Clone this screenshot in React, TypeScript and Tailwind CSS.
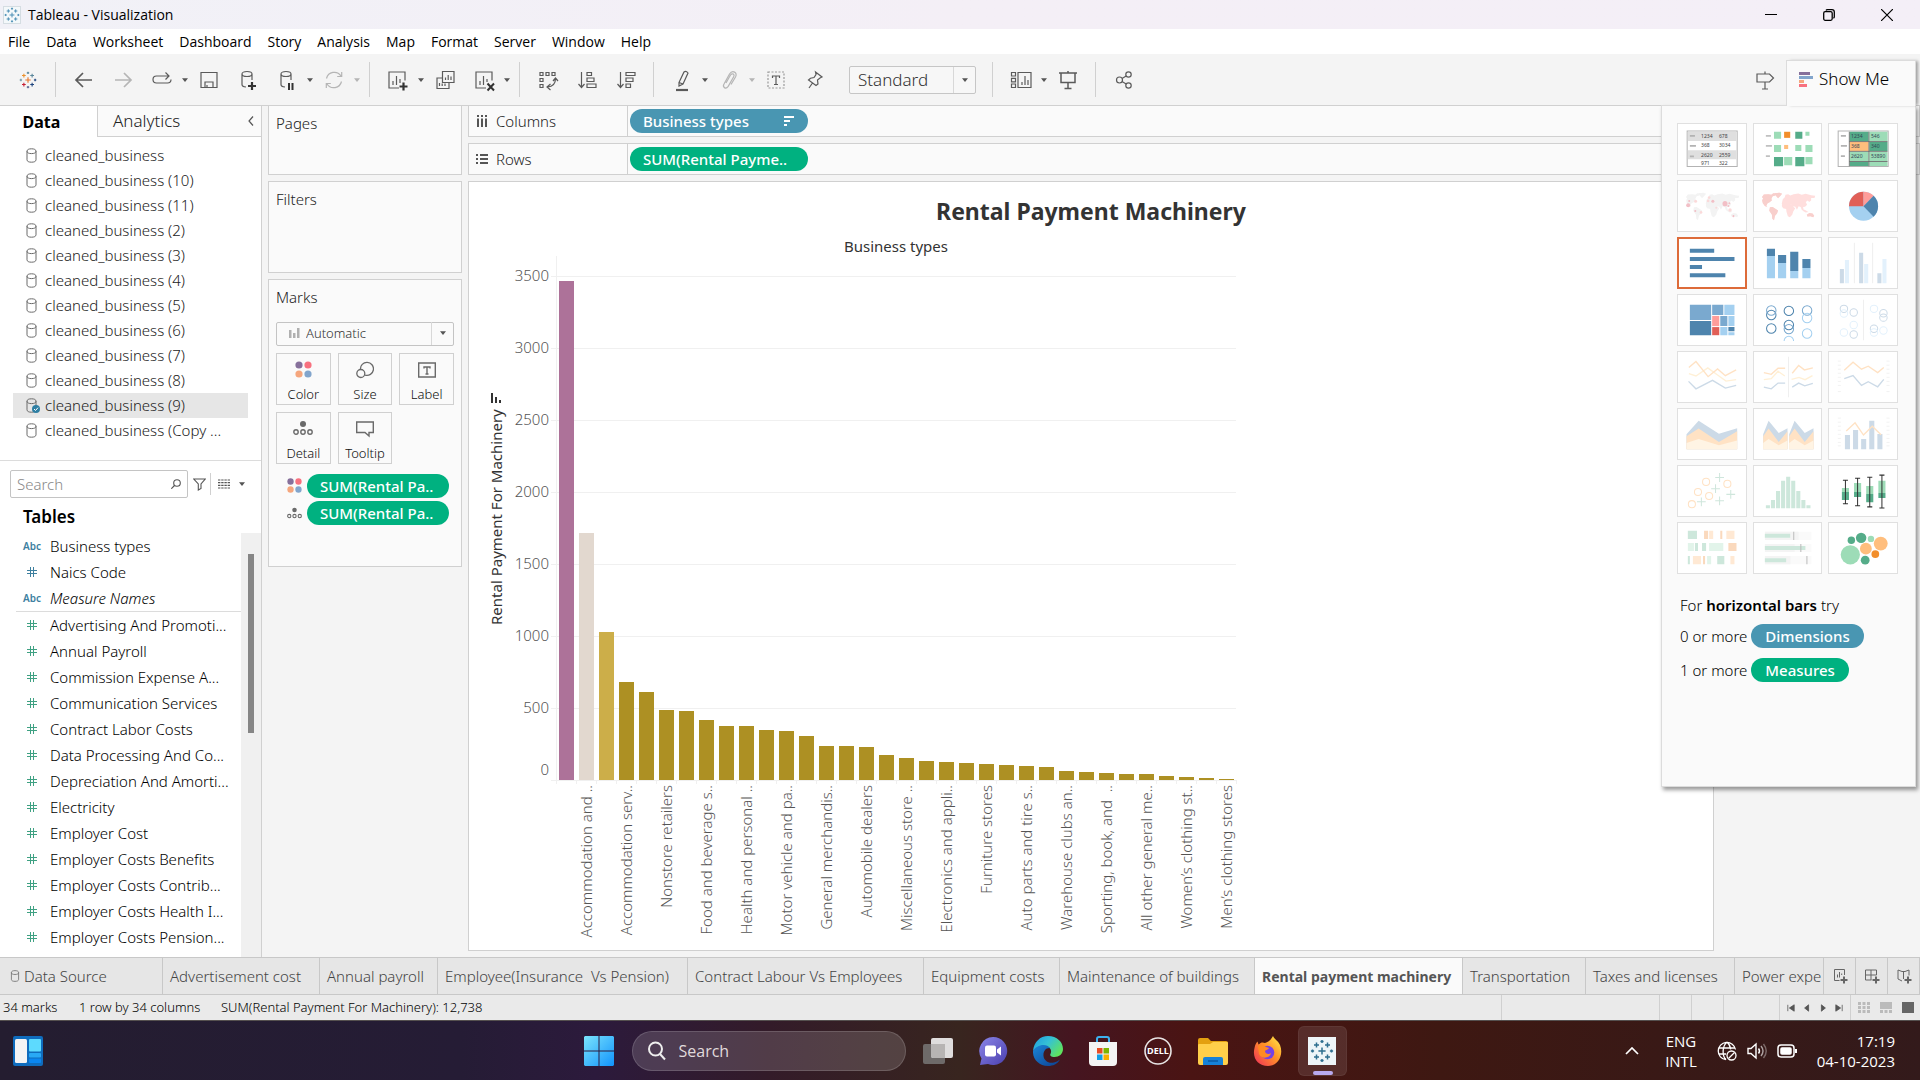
import React from 'react'

type Kids = { children?: React.ReactNode }

/* ---------- small shared drawings ---------- */

function Caret({ light = false }: { light?: boolean }) {
  return (
    <svg viewBox="0 0 8 5" className={light ? 'h-[4px] w-[6px] text-[#b5b5b5]' : 'h-[4px] w-[6px] text-[#555]'} aria-hidden="true">
      <path d="M0 0h8L4 5z" fill="currentColor" />
    </svg>
  )
}

function Cylinder({ className = 'h-[15px] w-[11px]' }: { className?: string }) {
  return (
    <svg viewBox="0 0 11 15" className={className} fill="none" stroke="#6a6a6a" aria-hidden="true">
      <path d="M1 3.2C1 1.600 2.800 .8 5.500 .8S10 1.600 10 3.200v8.600c0 1.600-1.800 2.400-4.500 2.400S1 13.400 1 11.800zM1 3.200c0 1.600 1.800 2.400 4.500 2.400S10 4.800 10 3.200" />
    </svg>
  )
}

function ColorDots({ className = 'h-4 w-4' }: { className?: string }) {
  return (
    <svg viewBox="0 0 17 17" className={className} aria-hidden="true">
      <circle cx="4" cy="4" r="3.6" fill="#86709b" />
      <circle cx="13" cy="4" r="3.6" fill="#f8717f" />
      <circle cx="4" cy="13" r="3.6" fill="#f5a67d" />
      <circle cx="13" cy="13" r="3.6" fill="#82a5cc" />
    </svg>
  )
}

function DetailDots({ className = 'h-4 w-5' }: { className?: string }) {
  return (
    <svg viewBox="0 0 20 16" className={className} fill="none" stroke="#6a6a6a" strokeWidth="1.4" aria-hidden="true">
      <circle cx="10" cy="4" r="3" fill="#6a6a6a" stroke="none" />
      <circle cx="3" cy="12" r="2.2" />
      <circle cx="10" cy="12" r="2.200" />
      <circle cx="17" cy="12" r="2.200" />
    </svg>
  )
}

/* Cross made of smaller crosses; one colour per cross */
function TableauMark({ className, colors }: { className: string; colors: string[] }) {
  const marks: [number, number, number][] = [
    [12, 12, 3.600], [6.500, 6, 2.500], [17.500, 6, 2.500], [6.500, 18, 2.500], [17.500, 18, 2.500],
    [12, 2.500, 1.600], [12, 21.500, 1.600], [2.500, 12, 1.600], [21.500, 12, 1.600],
  ]
  return (
    <svg viewBox="0 0 24 24" className={className} strokeWidth="1.5" aria-hidden="true">
      {marks.map(([x, y, r], i) => (
        <path key={i} d={`M${x - r} ${y}h${2 * r}M${x} ${y - r}v${2 * r}`} stroke={colors[i % colors.length]} />
      ))}
    </svg>
  )
}

/* ---------- title bar and menu ---------- */

function TitleBar() {
  return (
    <header className="flex h-[29px] items-center bg-linear-to-r from-[#f1f1f7] via-[#f4eff6] to-[#f4eff7] font-['Open_Sans',sans-serif] font-normal">
      <div className="ml-[3px] flex h-[18px] w-[18px] items-center justify-center border border-[#d5dde2] bg-[#f3f8fa]">
        <TableauMark className="h-4 w-4" colors={['#4d8fb5']} />
      </div>
      <h1 className="ml-[7px] flex-1 text-[14px] text-black">Tableau - Visualization</h1>
      <div className="flex h-full pr-1 text-black">
        <button aria-label="Minimize" className="flex w-[58px] items-center justify-center">
          <svg viewBox="0 0 12 12" className="h-3 w-3"><path d="M0 5.500h12" stroke="currentColor" /></svg>
        </button>
        <button aria-label="Restore" className="flex w-[58px] items-center justify-center">
          <svg viewBox="0 0 12 12" className="h-3 w-3" fill="none" stroke="currentColor" strokeWidth="1.300">
            <rect x=".7" y="2.700" width="8.500" height="8.600" rx="1.500" />
            <path d="M3 1.500Q3.300.7 4.500.7H9q2.300 0 2.300 2.300v4.700q0 1-.9 1.500" />
          </svg>
        </button>
        <button aria-label="Close" className="flex w-[58px] items-center justify-center">
          <svg viewBox="0 0 12 12" className="h-3 w-3"><path d="M0 0l12 12M12 0L0 12" stroke="currentColor" strokeWidth="1.200" /></svg>
        </button>
      </div>
    </header>
  )
}

function MenuBar() {
  const items = ['File', 'Data', 'Worksheet', 'Dashboard', 'Story', 'Analysis', 'Map', 'Format', 'Server', 'Window', 'Help']
  return (
    <nav className="flex h-[25px] items-center bg-white font-['Open_Sans',sans-serif] text-[14px] font-normal text-black">
      {items.map((m) => (
        <button key={m} className="px-2">{m}</button>
      ))}
    </nav>
  )
}

/* ---------- toolbar ---------- */

function Tool({ label, light = false, children }: Kids & { label: string; light?: boolean }) {
  return (
    <button aria-label={label} className={light ? 'flex h-8 w-[39px] items-center justify-center text-[#b5b5b5]' : 'flex h-8 w-[39px] items-center justify-center text-[#5a5a5a]'}>
      <svg viewBox="0 0 24 24" className="h-6 w-6" fill="none" stroke="currentColor" strokeWidth="1.200" aria-hidden="true">
        {children}
      </svg>
    </button>
  )
}

function Drop({ label, light = false }: { label: string; light?: boolean }) {
  return (
    <button aria-label={label} className="flex h-8 w-2 items-center justify-center">
      <Caret light={light} />
    </button>
  )
}

const Rule = () => <div className="mx-2 h-[35px] w-px bg-[#d0d0d0]" />

function Toolbar() {
  return (
    <div className="flex h-[51px] items-center bg-[#f4f4f4] pl-2">
      <button aria-label="Start page" className="flex h-8 w-[39px] items-center justify-center">
        <TableauMark className="h-[18px] w-[18px]" colors={['#e8762c', '#eb912c', '#5b879b', '#c72035', '#1f447e', '#59879b', '#5b6591', '#7199a6', '#1f457e']} />
      </button>
      <Rule />
      <Tool label="Undo"><path d="M20 12H4.500M11 5l-7 7 7 7" strokeWidth="1.700" /></Tool>
      <Tool label="Redo" light><path d="M4 12h15.500M13 5l7 7-7 7" strokeWidth="1.700" /></Tool>
      <Tool label="Replay">
        <path d="M13 15H6.500Q3 15 3 11.500T6.500 8H19M17.500 15Q21 15 21 11.500M12.500 15h5M15.500 4.500L19 8l-3.500 3.500" />
      </Tool>
      <Drop label="Replay options" />
      <Tool label="Save"><path d="M4 4.500h16v15H4zM8 19.500v-5.500h8v5.500M10 17v2.500" /></Tool>
      <Tool label="New data source">
        <path d="M6 6c0-1.500 2-2.500 5-2.500s5 1 5 2.500v6M6 6v10.500c0 1.500 1.500 2.300 4 2.500M6 6c0 1.500 2 2.500 5 2.500S16 7.500 16 6" />
        <path d="M16 14v8M12 18h8" stroke="#333" strokeWidth="2.200" />
      </Tool>
      <Tool label="Pause auto updates">
        <path d="M6 6c0-1.500 2-2.500 5-2.500s5 1 5 2.500v6M6 6v10.500c0 1.500 1.500 2.300 4 2.500M6 6c0 1.500 2 2.500 5 2.500S16 7.500 16 6" />
        <path d="M14 15v7M17.500 15v7" stroke="#333" strokeWidth="2" />
      </Tool>
      <Drop label="Update options" />
      <Tool label="Run update" light>
        <path d="M4.500 10.500A8 8 0 0 1 19 8M19.500 13.500A8 8 0 0 1 5 16M19.700 4v4.500h-4.500M4.300 20v-4.500h4.500" />
      </Tool>
      <Drop label="Run options" light />
      <Rule />
      <Tool label="New worksheet">
        <path d="M19 12.500V4H3v16h10M7 17v-4M10.500 17V8M14 15v-4" />
        <path d="M17.500 14.500v8M13.500 18.500h8" stroke="#333" strokeWidth="2.200" />
      </Tool>
      <Drop label="New sheet options" />
      <Tool label="Duplicate sheet">
        <path d="M9.500 3.500h11.500v11H9.500zM12.500 12V9.500M15.200 12V7M18 12V8.500M9.500 10H4v10.500h12v-6M6.500 18v-3M9.200 18v-2.500M12 18v-2.500" />
      </Tool>
      <Tool label="Clear sheet">
        <path d="M20 12.500V4H4v16h10M8 17v-4M11.500 17V8M15 14v-3" />
        <path d="M15.500 15.500l6.500 7M22 15.500l-6.500 7" stroke="#333" strokeWidth="2" />
      </Tool>
      <Drop label="Clear options" />
      <Rule />
      <Tool label="Swap rows and columns">
        <path d="M4 4.500h3v3H4zM10 4.500h3v3h-3zM16 4.500h3v3h-3zM4 10.500h3v3H4zM4 16.500h3v3H4zM19.500 10.500c0 5-2 8-8 8.500M17 13l2.500-3 2.500 3M14.500 16l-3.500 3 3.500 3" />
      </Tool>
      <Tool label="Sort ascending">
        <path d="M6.500 4v15M3.500 16l3 3.500 3-3.500M12 4.500h4.500v3H12zM12 10h7v3.500h-7zM12 16h9v3.500h-9z" />
      </Tool>
      <Tool label="Sort descending">
        <path d="M6.500 4v15M3.500 16l3 3.500 3-3.500M12 4.500h9v3h-9zM12 10h7v3.500h-7zM12 16h4.500v3.500H12z" />
      </Tool>
      <Rule />
      <Tool label="Highlight">
        <path d="M9 14.500L14 4q2-1.500 4 1l-5 11-4 2zM9 14.500l4 1.500" />
        <path d="M6 22h12" strokeWidth="2.200" />
      </Tool>
      <Drop label="Highlight options" />
      <Tool label="Group members" light>
        <path d="M9 15l4.500-8c2-2.500 4.500-.5 3.200 1.800l-5.500 9.500c-2.500 3.500-6 .8-4.200-2.300L12.500 6C15.500 1.500 21 4.500 18.500 9L14 16.500" />
      </Tool>
      <Drop label="Group options" light />
      <Tool label="Show mark labels">
        <rect x="4" y="4" width="16" height="16" stroke="#999" strokeDasharray="2 1.500" />
        <path d="M8.500 10V8h7v2M12 8v8.500M10 16.500h4" />
      </Tool>
      <Tool label="Fix axes">
        <path d="M12.500 4l6.500 5-2 1-2.500 2 .5 4-2 1.500-7.500-5.500 2-1.800 3.500-.7 2-3zM9.500 15L6 20" />
      </Tool>
      <div className="relative ml-[15px] mr-2">
        <select aria-label="Fit" className="h-7 w-[127px] appearance-none rounded-xs border border-[#c6c6c6] bg-[#f7f7f7] pl-2 text-[17px] leading-6 text-[#333]">
          <option>Standard</option>
        </select>
        <div className="pointer-events-none absolute inset-y-px right-px flex w-[22px] items-center justify-center border-l border-[#d8d8d8]"><Caret /></div>
      </div>
      <Rule />
      <Tool label="Show or hide cards">
        <path d="M2.500 4.500h4v3.500h-4zM2.500 10.300h4v3.500h-4zM2.500 16h4v3.500h-4zM9 4.500h13v15H9zM13 17v-3M16 17V8M19 17v-5" />
      </Tool>
      <Drop label="Card options" />
      <Tool label="Presentation mode"><path d="M3 5h18M5 5v9.500h14V5M12 14.500v6M8.500 20.500h7M12 3v2" strokeWidth="1.500" /></Tool>
      <Rule />
      <Tool label="Share">
        <circle cx="7.500" cy="12" r="3" /><circle cx="16.500" cy="6.500" r="2.700" /><circle cx="16.500" cy="17.500" r="2.700" />
        <path d="M10 10.500l4.200-2.500M10 13.500l4.200 2.500" />
      </Tool>
      <div className="ml-auto mr-[136px]">
        <Tool label="Guide"><path d="M4 6h12.500l4 4-4 4H4zM12 3.500v2.500M12 14v7M9 21h6" /></Tool>
      </div>
    </div>
  )
}

/* ---------- data pane ---------- */

const sources = ['', ' (10)', ' (11)', ' (2)', ' (3)', ' (4)', ' (5)', ' (6)', ' (7)', ' (8)', ' (9)', ' (Copy ...']

const measures = [
  'Advertising And Promoti...', 'Annual Payroll', 'Commission Expense A...', 'Communication Services', 'Contract Labor Costs',
  'Data Processing And Co...', 'Depreciation And Amorti...', 'Electricity', 'Employer Cost', 'Employer Costs Benefits',
  'Employer Costs Contrib...', 'Employer Costs Health I...', 'Employer Costs Pension...',
]

function HashIcon({ green = false }: { green?: boolean }) {
  return (
    <svg viewBox="0 0 10 10" className="h-[10px] w-[10px]" stroke={green ? '#3fa183' : '#3d7f9f'} strokeWidth="1" aria-hidden="true">
      <path d="M3.500 0v10M6.500 0v10M0 3.500h10M0 6.500h10" />
    </svg>
  )
}

function Field({ icon, name, italic = false }: { icon: React.ReactNode; name: string; italic?: boolean }) {
  return (
    <li className="flex h-[26px] items-center">
      <span className="flex w-8 justify-center">{icon}</span>
      <span className={italic ? 'pl-[2px] italic' : 'pl-[2px]'}>{name}</span>
    </li>
  )
}

const Abc = () => <span className="text-[10px] font-semibold text-[#3d7f9f]">Abc</span>

function DataPane() {
  return (
    <aside className="flex w-[262px] shrink-0 flex-col border-r border-[#d0d0d0] bg-white text-[15px] text-[#222]">
      <div className="flex h-[31px]">
        <button className="w-[97px] pr-7 text-[16px] font-bold text-black"><span className="pl-[14px]">Data</span></button>
        <button className="flex flex-1 items-center justify-between border-b border-l border-[#d0d0d0] bg-[#fafafa] pl-[15px] pr-[7px] text-[17px] text-[#222]">
          Analytics
          <svg viewBox="0 0 6 10" className="h-[10px] w-[6px]" fill="none" stroke="#555" strokeWidth="1.200" aria-hidden="true"><path d="M5 .5L1 5l4 4.500" /></svg>
        </button>
      </div>
      <ul className="h-[324px] border-b border-[#dcdcdc] px-[13px] pt-[6px]">
        {sources.map((s) => (
          <li key={s} className={s === ' (9)' ? 'flex h-[25px] items-center gap-2 bg-[#e6e6e6] pl-[13px]' : 'flex h-[25px] items-center gap-2 pl-[13px]'}>
            <span className="relative">
              <Cylinder />
              {s === ' (9)' && (
                <svg viewBox="0 0 8 8" className="absolute -right-[3px] bottom-0 h-2 w-2" aria-hidden="true">
                  <circle cx="4" cy="4" r="4" fill="#2f7fa3" />
                  <path d="M2 4l1.500 1.500L6 2.700" fill="none" stroke="#fff" />
                </svg>
              )}
            </span>
            <span className="whitespace-nowrap">cleaned_business{s}</span>
          </li>
        ))}
      </ul>
      <div className="flex items-center pl-[10px] pt-[9px]">
        <label className="flex h-7 w-[178px] shrink-0 items-center rounded-xs border border-[#c4c4c4] bg-white px-[6px]">
          <input aria-label="Search fields" placeholder="Search" className="w-full min-w-0 outline-none placeholder:text-[#888]" />
          <svg viewBox="0 0 10 10" className="h-[10px] w-[10px] shrink-0" fill="none" stroke="#555" strokeWidth="1.100" aria-hidden="true"><circle cx="6" cy="4" r="3.300" /><path d="M3.500 6.500L.3 9.700" /></svg>
        </label>
        <button aria-label="Filter fields" className="flex w-[22px] justify-center">
          <svg viewBox="0 0 13 13" className="h-[13px] w-[13px]" fill="none" stroke="#555" strokeWidth="1.100"><path d="M.8 1h11.400L8 6v4.500L5.300 12V6z" /></svg>
        </button>
        <div className="h-[22px] w-px bg-[#d0d0d0]" />
        <button aria-label="View as" className="flex w-[34px] items-center justify-end gap-[9px]">
          <svg viewBox="0 0 12 10" className="h-[10px] w-3" stroke="#555" strokeWidth="1.200" strokeDasharray="2.400 .8"><path d="M0 1h12M0 3.700h12M0 6.300h12M0 9h12" /></svg>
          <Caret />
        </button>
      </div>
      <h2 className="pl-[23px] pt-[7px] text-[17px] font-semibold leading-6 text-black">Tables</h2>
      <div className="mt-[4px] flex min-h-0 flex-1 overflow-hidden text-black">
        <ul className="flex-1 whitespace-nowrap pl-4">
          <Field icon={<Abc />} name="Business types" />
          <Field icon={<HashIcon />} name="Naics Code" />
          <Field icon={<Abc />} name="Measure Names" italic />
          <li className="border-b border-[#dcdcdc]" />
          {measures.map((m) => <Field key={m} icon={<HashIcon green />} name={m} />)}
        </ul>
        <div className="w-5 bg-[#f0f0f0] pt-[21px]">
          <div className="mx-auto h-[179px] w-[6px] bg-[#868686]" />
        </div>
      </div>
    </aside>
  )
}

/* ---------- cards ---------- */

function MarkButton({ label, children }: Kids & { label: string }) {
  return (
    <button className="flex h-[52px] flex-col items-center justify-between border border-[#d0d0d0] pb-px pt-[7px] text-[13px] leading-[18px] text-[#111]">
      {children}
      {label}
    </button>
  )
}

function MarksPill({ icon }: { icon: React.ReactNode }) {
  return (
    <div className="flex items-center">
      <span className="flex w-[31px] justify-center pl-[5px]">{icon}</span>
      <button className="h-6 w-[142px] rounded-full bg-[#00b180] pl-[13px] text-left font-medium leading-6 text-white">SUM(Rental Pa..</button>
    </div>
  )
}

function Cards() {
  return (
    <section className="flex w-[194px] shrink-0 flex-col gap-[6px] text-[15px] text-[#222]">
      <div className="h-[69px] border border-t-0 border-[#d0d0d0] bg-[#fafafa] px-[7px] pt-[6px] leading-[22px]">Pages</div>
      <div className="h-[92px] border border-[#d0d0d0] bg-[#fafafa] px-[7px] pt-[6px] leading-[22px]">Filters</div>
      <div className="h-[288px] border border-[#d0d0d0] bg-[#fafafa] px-[7px] pt-[6px]">
        <h2 className="leading-[22px]">Marks</h2>
        <div className="relative mt-[13px]">
          <svg viewBox="0 0 11 10" className="absolute left-[13px] top-[7px] h-[10px] w-[11px]" fill="#b0b0b0" aria-hidden="true"><path d="M0 2h2.500v8H0zM4 5h2.500v5H4zM8 0h2.500v10H8z" /></svg>
          <select aria-label="Mark type" className="h-6 w-full appearance-none rounded-xs border border-[#c4c4c4] bg-[#fafafa] pl-[29px] text-[13px] text-[#333]">
            <option>Automatic</option>
          </select>
          <div className="pointer-events-none absolute inset-y-px right-px flex w-[22px] items-center justify-center border-l border-[#d8d8d8]"><Caret /></div>
        </div>
        <div className="mt-[7px] grid grid-cols-3 gap-[7px]">
          <MarkButton label="Color"><ColorDots className="h-[17px] w-[17px]" /></MarkButton>
          <MarkButton label="Size">
            <svg viewBox="0 0 18 18" className="h-[18px] w-[18px]" fill="none" stroke="#6a6a6a" strokeWidth="1.300"><path d="M4.500 8.500a6.500 6.500 0 1 1 4.600 5.600" /><circle cx="4.800" cy="12.500" r="4" /></svg>
          </MarkButton>
          <MarkButton label="Label">
            <svg viewBox="0 0 18 18" className="h-[18px] w-[18px]" fill="none" stroke="#6a6a6a" strokeWidth="1.400"><path d="M.7 2h16.600v14H.7zM6 7.500V6h6v1.500M9 6v7M7.500 13h3" /></svg>
          </MarkButton>
          <MarkButton label="Detail"><DetailDots /></MarkButton>
          <MarkButton label="Tooltip">
            <svg viewBox="0 0 18 18" className="h-[18px] w-[18px]" fill="none" stroke="#6a6a6a" strokeWidth="1.400"><path d="M.7 2h16.600v10.500H13V16l-4-3.500H.7z" /></svg>
          </MarkButton>
        </div>
        <div className="mt-[10px] flex flex-col gap-[3px]">
          <MarksPill icon={<ColorDots className="h-[15px] w-[15px]" />} />
          <MarksPill icon={<DetailDots className="h-3 w-[15px]" />} />
        </div>
      </div>
    </section>
  )
}

/* ---------- shelves and chart ---------- */

function Shelf({ name, icon, children, first = false }: Kids & { name: string; icon: string; first?: boolean }) {
  return (
    <div className={first ? 'flex h-[31px] border border-t-0 border-[#d0d0d0] bg-[#fafafa]' : 'flex h-8 border border-[#d0d0d0] bg-[#fafafa]'}>
      <div className="flex w-[159px] items-center gap-2 border-r border-[#d0d0d0] pl-[7px] text-[#222]">
        <svg viewBox="0 0 12 12" className="h-3 w-3" stroke="#555" strokeWidth="2" aria-hidden="true"><path d={icon} /></svg>
        {name}
      </div>
      <div className="flex items-center pl-[2px] font-medium text-white">{children}</div>
    </div>
  )
}

const bars = [499, 247, 148, 98, 88, 70, 69, 60, 54, 54, 50, 49, 44, 34, 34, 33, 25, 22, 19, 18, 17, 16, 15, 14, 13, 9, 8, 7, 6, 6, 4, 3, 2, 1]
const barColors = ['#ad7299', '#e2d8cf', '#ccae49']
const categories = [
  'Accommodation and ..', 'Accommodation serv..', 'Nonstore retailers', 'Food and beverage s..', 'Health and personal ..', 'Motor vehicle and pa..',
  'General merchandis..', 'Automobile dealers', 'Miscellaneous store ..', 'Electronics and appli..', 'Furniture stores', 'Auto parts and tire s..',
  'Warehouse clubs an..', 'Sporting, book, and  ..', 'All other general me..', 'Women’s clothing st..', 'Men’s clothing stores',
]

function Chart() {
  const ticks = [0, 500, 1000, 1500, 2000, 2500, 3000, 3500]
  return (
    <svg viewBox="481 236 760 710" className="ml-3 h-[710px] w-[760px]" fontSize="15" role="img" aria-label="Rental payment for machinery by business type">
      <text x="896" y="252" textAnchor="middle" fill="#333" className="font-normal">Business types</text>
      {ticks.map((t) => (
        <g key={t}>
          <path d={`M551 ${780.5 - t * 0.144}H1236`} stroke="#f0f0f0" />
          <text x="549" y={t === 0 ? 775 : 785 - t * 0.144} textAnchor="end" fill="#555">{t}</text>
        </g>
      ))}
      <path d="M556.500 256v528" stroke="#f0f0f0" />
      {bars.map((h, i) => (
        <g key={i}>
          <path d={`M${576.5 + i * 20} 780v4`} stroke="#f0f0f0" />
          <rect x={559 + i * 20} y={780 - h} width="15" height={h} fill={barColors[i] ?? '#ad9023'} />
        </g>
      ))}
      {categories.map((c, i) => (
        <text key={c} transform={`translate(${592 + i * 40} 785) rotate(-90)`} textAnchor="end" fill="#555" xmlSpace="preserve">{c}</text>
      ))}
      <text transform="translate(502 625) rotate(-90)" fill="#333" className="font-normal">Rental Payment For Machinery</text>
      <path d="M491 393h2v10h-2zM495 397h2v6h-2zM499 400h2v3h-2z" fill="#333" />
    </svg>
  )
}

function Worksheet() {
  return (
    <main className="flex min-w-0 flex-1 flex-col gap-[6px] pb-[6px] text-[15px]">
      <Shelf first name="Columns" icon="M2 3.500v8.500M6 3.500v8.500M10 3.500v8.500M2 0v2M6 0v2M10 0v2">
        <button className="flex h-6 w-[178px] items-center justify-between rounded-full bg-[#4996b2] pl-[13px] pr-[14px]">
          Business types
          <svg viewBox="0 0 10 10" className="h-[10px] w-[10px]" fill="#fff" aria-hidden="true"><path d="M0 0h10v2H0zM0 4h6v2H0zM0 8h3v2H0z" /></svg>
        </button>
      </Shelf>
      <Shelf name="Rows" icon="M0 2h2M4 2h8M0 6h2M4 6h8M0 10h2M4 10h8">
        <button className="h-6 w-[178px] rounded-full bg-[#00b180] pl-[13px] text-left">SUM(Rental Payme..</button>
      </Shelf>
      <div className="mr-[206px] flex-1 border border-[#d0d0d0] bg-white">
        <h2 className="pb-2 pt-3 text-center text-[23px] font-bold leading-[34px] text-[#333]">Rental Payment Machinery</h2>
        <Chart />
      </div>
    </main>
  )
}

/* ---------- Show Me ---------- */

const world = 'M336 262l6-8 14-1 8 2 6-5 10 1-4 6-8 2-4 8 2 4-7 6-6 3-4 8 4 4-8-4-6-8-2-8 3-8zM374 250l14-1 8 3-6 7-6 6-5-6zM360 292l8-1 8 5 8 5-3 9-6 7-3 13-5-4-1-12-8-12zM398 268l6-6 2-7 8-2 6 4 10-4 14-2 10 4 12-3 16 4 12 2-2 6-10 0 0 8-6 4-4-4-6 4 4 8-6 6-6 1 2 8-5 2-4-10-6-2-5 10-5-9-8-2-4-6-10 2-8-1-8 4-2-6zM397 281l14-2 14 4 6 9 4 3-6 9-3 10-7 7-6-3-4-13-1-8-9-2-4-7zM456 296l8 4 10 6-8 1-8-4zM469 314l8-5 9 1 5 7-3 4-8-3-9 1z'

const thumbs: { label: string; art: React.ReactNode }[] = [
  {
    label: 'Text table',
    art: (
      <g>
        <path d="M30 24h148v105H30z" fill="#fff" stroke="#b3b3b3" strokeWidth="3" />
        <path d="M32 26h144v27H32zM32 81h144v26H32z" fill="#dfdfdf" />
        <path d="M38 38h15M38 68h18M38 99h12" stroke="#b3b3b3" strokeWidth="5" />
        <g fontSize="15" fill="#444" fontWeight="400"><text x="71" y="45">1234</text><text x="124" y="45">678</text><text x="71" y="72">368</text><text x="124" y="72">3034</text><text x="71" y="100">2620</text><text x="124" y="100">2559</text><text x="71" y="123">971</text><text x="124" y="123">322</text></g>
      </g>
    ),
  },
  {
    label: 'Heat map',
    art: (
      <g>
        <path d="M38 38h15M38 68h18M38 98h12" stroke="#c0c0c0" strokeWidth="5" />
        <path d="M62 26h21v21H62zM155 26h12v12h-12zM62 65h21v21H62zM125 65h18v18h-18zM155 65h21v21h-21zM92 101h24v24H92zM155 101h21v21h-21z" fill="#9ddcb7" />
        <path d="M125 26h21v21h-21zM62 101h27v27H62zM125 101h27v27h-27z" fill="#55ac89" />
        <path d="M92 26h18v18H92z" fill="#f28e2b" /><path d="M92 65h12v12H92z" fill="#ffbe7d" />
      </g>
    ),
  },
  {
    label: 'Highlight table',
    art: (
      <g>
        <path d="M30 24h148v105H30z" fill="#fff" stroke="#b3b3b3" strokeWidth="3" />
        <path d="M64 26h56v28H64zM122 56h54v27h-54zM64 115h56v12H64z" fill="#55ac89" />
        <path d="M122 26h54v28h-54zM64 85h56v28H64zM122 85h54v28h-54zM122 115h54v12h-54z" fill="#9ddcb7" /><path d="M64 56h56v27H64z" fill="#ffbe7d" />
        <path d="M63 26v102M121 26v102M63 55h113M63 84h113M63 114h113" stroke="#666" strokeWidth="2.500" />
        <path d="M38 38h15M38 68h18M38 98h12" stroke="#b3b3b3" strokeWidth="5" />
        <g fontSize="15" fill="#345" fontWeight="400"><text x="68" y="44">1234</text><text x="127" y="44">546</text><text x="68" y="74">368</text><text x="127" y="74">340</text><text x="68" y="105">2620</text><text x="127" y="105">53890</text></g>
      </g>
    ),
  },
  {
    label: 'Symbol map',
    art: (
      <g>
        <path d={world} transform="translate(-310 -211)" fill="#f3f3f3" />
        <g fill="#f2bfc6"><circle cx="33" cy="75" r="6" /><circle cx="36" cy="62" r="3" /><circle cx="106" cy="63" r="4.500" /><circle cx="142" cy="70" r="7.500" /><circle cx="155" cy="69" r="3" /><circle cx="152" cy="77" r="3" /><circle cx="54" cy="92" r="3" /><circle cx="167" cy="107" r="3" /></g>
        <g fill="#fbdada"><circle cx="55" cy="63" r="4.500" /><circle cx="92" cy="62" r="4" /><circle cx="95" cy="52" r="4" /><circle cx="71" cy="96" r="4" /><circle cx="116" cy="82" r="3" /><circle cx="157" cy="89" r="5" /></g>
      </g>
    ),
  },
  {
    label: 'Filled map',
    art: (
      <g transform="translate(-310 -211)"><path d={world} fill="#ffdedd" /><path d="M336 262l6-8 14-1 8 2 6-5 10 1-4 6-8 2-4 8 2 4-7 6-6 3-4 8 4 4-8-4-6-8-2-8 3-8zM374 250l14-1 8 3-6 7-6 6-5-6zM360 292l8-1 8 5 8 5-3 9-6 7-3 13-5-4-1-12-8-12zM469 314l8-5 9 1 5 7-3 4-8-3-9 1z" fill="#f8cfcc" /></g>
    ),
  },
  {
    label: 'Pie chart',
    art: (
      <g><circle cx="105" cy="78" r="43" fill="#a4d0f0" /><path d="M105 78V35A43 43 0 0 0 62 78z" fill="#e15f57" /><path d="M105 78V35a43 43 0 0 1 30 12z" fill="#ff9d9a" /><path d="M105 78l30-31a43 43 0 0 1 0 62z" fill="#4e84ad" /></g>
    ),
  },
  { label: 'Horizontal bars', art: <path d="M38 35h72v12H38zM38 59h132v12H38zM38 83h36v12H38zM38 107h105v12H38z" fill="#4e84ad" /> },
  {
    label: 'Stacked bars',
    art: <g><path d="M41 35h24v21H41zM74 53h24v24H74zM110 44h24v57h-24zM146 65h24v27h-24z" fill="#4e84ad" /><path d="M41 56h24v66H41zM74 77h24v45H74zM110 101h24v21h-24zM146 92h24v30h-24z" fill="#a4d0f0" /></g>,
  },
  {
    label: 'Side-by-side bars',
    art: <g><path d="M78 17v120M132 17v120" stroke="#efefef" strokeWidth="3" /><path d="M35 95h12v42H35zM92 47h12v90H92zM146 107h12v30h-12z" fill="#ccdae7" /><path d="M50 68h12v69H50zM107 80h12v57h-12zM161 65h12v72h-12z" fill="#e3f1fc" /></g>,
  },
  {
    label: 'Treemap',
    art: <g><path d="M38 32h63v45H38zM104 32h33v30h-33zM128 65h21v30h-21z" fill="#7aa9cf" /><path d="M38 80h63v42H38zM152 98h18v12h-18z" fill="#4e84ad" /><path d="M140 32h30v30h-30zM152 65h18v30h-18zM128 98h21v24h-21zM152 113h18v9h-18z" fill="#a4d0f0" /><path d="M104 65h21v30h-21z" fill="#ff9d9a" /><path d="M104 98h21v24h-21z" fill="#e15f57" /></g>,
  },
  {
    label: 'Circle views',
    art: (
      <g fill="none" strokeWidth="3">
        <g stroke="#4e84ad"><circle cx="54" cy="62" r="14" /><circle cx="54" cy="102" r="14" /><circle cx="106" cy="50" r="14" /><circle cx="106" cy="92" r="14" /></g>
        <g stroke="#7aa9cf"><circle cx="54" cy="49" r="14" /><circle cx="106" cy="104" r="14" /><circle cx="160" cy="49" r="14" /></g>
        <g stroke="#a4d0f0"><circle cx="160" cy="71" r="14" /><circle cx="160" cy="117" r="14" /><path d="M92 139a14 14 0 0 1 28 0" /></g>
      </g>
    ),
  },
  {
    label: 'Side-by-side circles',
    art: (
      <g fill="none" strokeWidth="3"><path d="M105 17v120" stroke="#efefef" />
        <g stroke="#ccdae7"><circle cx="47" cy="44" r="11" /><circle cx="76" cy="55" r="11" /><circle cx="76" cy="120" r="11" /><circle cx="164" cy="57" r="11" /><circle cx="164" cy="70" r="11" /><circle cx="136" cy="103" r="11" /></g>
        <g stroke="#e3f1fc"><circle cx="47" cy="58" r="11" /><circle cx="76" cy="92" r="11" /><circle cx="47" cy="114" r="11" /><circle cx="136" cy="44" r="11" /><circle cx="136" cy="114" r="11" /><circle cx="164" cy="108" r="11" /></g>
      </g>
    ),
  },
  {
    label: 'Lines (continuous)',
    art: <g fill="none" strokeWidth="4"><path d="M35 67l21 7 35-24 30 22 24 17 30-4" stroke="#fff0d6" /><path d="M35 49l21-18 36 45 28-23 23 20 32-17" stroke="#ffe2c4" /><path d="M34 90l22 22 49-25 38 23 32-8" stroke="#ccdae7" /></g>,
  },
  {
    label: 'Lines (discrete)',
    art: <g fill="none" strokeWidth="4"><path d="M105 17v120" stroke="#efefef" strokeWidth="3" /><path d="M32 85l22-3 20-22 20 14M114 84l22-6 18 7 22-12" stroke="#fff0d6" /><path d="M32 64l22 5 20-18h21M116 66l19-23 17 13 25-6" stroke="#ffe2c4" /><path d="M32 107l22 5 20-17h21M116 107l19-12 18 8 24-7" stroke="#ccdae7" /></g>,
  },
  {
    label: 'Dual lines',
    art: <g fill="none" strokeWidth="4"><path d="M29 30h9M29 42h9M29 54h9M29 66h9M29 78h9M29 90h9M29 102h9M29 120h9M173 30h9M173 42h9M173 54h9M173 66h9M173 78h9M173 90h9M173 102h9M173 120h9" stroke="#efefef" strokeWidth="2.500" /><path d="M48 57l26-24 25 21 20-9 28 19 18-15" stroke="#ffe2c4" /><path d="M48 82l26-9 25 29 20-11 28 15 18-22" stroke="#ccdae7" /></g>,
  },
  {
    label: 'Area charts (continuous)',
    art: <g><path d="M28 78l36-40 60 38 54-16v62H28z" fill="#ccdae7" /><path d="M28 84l36-23 60 40 54-32v53H28z" fill="#ffe2c4" /><path d="M28 104l36-12 60 18 54-14v26H28z" fill="#fff4e4" /></g>,
  },
  {
    label: 'Area charts (discrete)',
    art: <g><path d="M30 78l16-40 30 36 26-14v62H30zM107 78l16-40 30 36 26-14v62h-72z" fill="#ccdae7" /><path d="M30 84l16-23 30 40 26-32v53H30zM107 84l16-23 30 40 26-32v53h-72z" fill="#ffe2c4" /><path d="M30 104l16-12 30 18 26-14v26H30zM107 104l16-12 30 18 26-14v26h-72z" fill="#fff4e4" /></g>,
  },
  {
    label: 'Dual combination',
    art: <g fill="none"><path d="M29 30h9M29 42h9M29 54h9M29 66h9M29 78h9M29 90h9M29 102h9M29 112h9M173 30h9M173 42h9M173 54h9M173 66h9M173 78h9M173 90h9M173 102h9M173 112h9" stroke="#efefef" strokeWidth="2.500" /><path d="M50 80h15v42H50zM74 65h15v57H74zM98 92h15v30H98zM122 38h15v84h-15zM146 77h15v45h-15z" fill="#ccdae7" /><path d="M54 68l26-24 25 36 26-26 26 25" stroke="#ffe2c4" strokeWidth="4" /></g>,
  },
  {
    label: 'Scatter plots',
    art: (
      <g fill="none" strokeWidth="3"><g stroke="#ffe2c4"><circle cx="86" cy="50" r="10.500" /><circle cx="149" cy="56" r="10.500" /><circle cx="62" cy="80" r="10.500" /><circle cx="95" cy="92" r="10.500" /><circle cx="44" cy="116" r="10.500" /></g><path d="M113 37h26M126 24v26M101 70h26M114 57v26M146 87h26M159 74v26M113 106h26M126 93v26M59 109h26M72 96v26" stroke="#cfe6dc" /></g>
    ),
  },
  { label: 'Histogram', art: <path d="M38 119h12v9H38zM53 104h12v24H53zM68 77h12v51H68zM83 47h12v81H83zM98 35h12v93H98zM113 47h12v81h-12zM128 77h12v51h-12zM143 104h12v24h-12zM158 119h12v9h-12z" fill="#cde7db" /> },
  {
    label: 'Box-and-whisker plots',
    art: <g><path d="M41 68h21v12H41zM77 53h21v27H77zM113 62h21v24h-21zM149 47h21v36h-21z" fill="#9ddcb7" /><path d="M41 80h21v24H41zM77 80h21v15H77zM113 86h21v24h-21zM149 83h21v15h-21z" fill="#55ac89" /><path d="M51.500 45v70M44 45h15M44 115h15M87.500 39v82M80 39h15M80 121h15M123.500 36v88M116 36h15M116 124h15M159.500 30v97M152 30h15M152 127h15" stroke="#333" strokeWidth="3" /></g>,
  },
  {
    label: 'Gantt chart',
    art: <g><path d="M32 26h27v24H32zM53 62h9v24h-9zM74 62h12v24H74zM32 101h6v24h-6zM119 101h21v24h-21z" fill="#cde7db" /><path d="M32 62h18v24H32zM95 62h42v24H95zM89 101h12v24H89z" fill="#e2f4ea" /><path d="M95 26h12v24H95zM146 26h24v24h-24zM47 101h24v24H47zM158 101h12v24h-12z" fill="#ffe9d4" /><path d="M80 26h12v24H80zM128 26h6v24h-6zM152 62h24v24h-24zM77 101h6v24h-6z" fill="#fad9bd" /></g>,
  },
  {
    label: 'Bullet graphs',
    art: <g><path d="M35 29h138v24H35zM35 65h138v24H35zM35 101h138v24H35z" fill="#fafafa" /><path d="M35 29h100v24H35zM35 65h88v24H35zM35 101h76v24H35z" fill="#f4f4f4" /><path d="M35 35h75v12H35zM35 71h120v12H35zM35 107h63v12H35z" fill="#cde7db" /><path d="M120.500 29v24M141.500 65v24M159.500 101v24" stroke="#bbb" strokeWidth="3" /></g>,
  },
  {
    label: 'Packed bubbles',
    art: <g><g fill="#9ddcb7"><circle cx="66" cy="97" r="28.500" /><circle cx="127" cy="50" r="9.500" /></g><g fill="#55ac89"><circle cx="69" cy="54" r="11" /><circle cx="98" cy="47" r="15.500" /><circle cx="110" cy="113" r="13" /></g><g fill="#ffbe7d"><circle cx="112" cy="79" r="17.500" /><circle cx="156" cy="64" r="20.500" /></g><circle cx="140" cy="95" r="11.500" fill="#f28e2b" /></g>,
  },
]

function ShowMe() {
  return (
    <div className="absolute right-[4px] top-[6px] z-10 flex w-[255px] flex-col">
      <div className="flex justify-end">
        <button className="relative z-10 -mb-px flex h-[46px] w-[130px] items-center gap-[6px] border border-b-0 border-[#dcdcdc] bg-[#fafafa] pb-[9px] pl-3 text-[17px] text-black shadow-[3px_0_3px_-1px_rgba(0,0,0,0.35)]">
          <svg viewBox="0 0 14 15" className="h-[15px] w-[14px]" aria-hidden="true"><path d="M0 0h11v3H0z" fill="#86709b" /><path d="M0 4h14v3H0z" fill="#82a5cc" /><path d="M0 8h5v3H0z" fill="#f5a67d" /><path d="M0 12h8v3H0z" fill="#f8717f" /></svg>
          Show Me
        </button>
      </div>
      <div className="border border-[#dcdcdc] bg-[#fafafa] pb-[104px] pl-[15px] pr-[17px] pt-[17px] text-[15px] text-black shadow-[2px_3px_4px_rgba(0,0,0,0.4)]">
        <div className="grid grid-cols-3 gap-x-[6px] gap-y-[5px]">
          {thumbs.map((t) => (
            <button key={t.label} aria-label={t.label} className={t.label === 'Horizontal bars' ? 'h-[52px] border-2 border-[#dd6b39] bg-white' : 'h-[52px] border border-[#e0e0e0] bg-white'}>
              <svg viewBox={t.label === 'Horizontal bars' ? '6 6 194 142' : '3 3 200 148'} className="h-full w-full" aria-hidden="true">{t.art}</svg>
            </button>
          ))}
        </div>
        <div className="pl-[3px]">
          <p className="pt-5 leading-[22px]">For <strong className="font-semibold">horizontal bars</strong> try</p>
          <p className="flex items-center gap-1 pt-2 leading-[24px]">0 or more <span className="h-6 rounded-full bg-[#4996b2] px-[14px] font-medium text-white">Dimensions</span></p>
          <p className="flex items-center gap-1 pt-[10px] leading-[24px]">1 or more <span className="h-6 rounded-full bg-[#00b180] px-[14px] font-medium text-white">Measures</span></p>
        </div>
      </div>
    </div>
  )
}

/* ---------- sheet tabs and status bar ---------- */

const sheets: { name: string; width: string }[] = [
  { name: 'Advertisement cost', width: 'w-[157px]' },
  { name: 'Annual payroll', width: 'w-[118px]' },
  { name: 'Employee(Insurance  Vs Pension)', width: 'w-[250px]' },
  { name: 'Contract Labour Vs Employees', width: 'w-[236px]' },
  { name: 'Equipment costs', width: 'w-[136px]' },
  { name: 'Maintenance of buildings', width: 'w-[195px]' },
  { name: 'Rental payment machinery', width: 'w-[208px]' },
  { name: 'Transportation', width: 'w-[123px]' },
  { name: 'Taxes and licenses', width: 'w-[149px]' },
]

function NewTab({ label, d }: { label: string; d: string }) {
  return (
    <button aria-label={label} className="flex w-8 shrink-0 items-center justify-center border-r border-[#c8c8c8]">
      <svg viewBox="0 0 16 16" className="h-4 w-4" fill="none" stroke="#666" aria-hidden="true"><path d={d} /><path d="M12 8.500v7M8.500 12h7" strokeWidth="2" /></svg>
    </button>
  )
}

function SheetTabs() {
  return (
    <div className="flex h-[38px] border-y border-[#c8c8c8] bg-[#e6e6e6] text-[15px] text-[#444]">
      <button className="flex w-[163px] shrink-0 items-center gap-1 border-r border-[#c8c8c8] pl-[10px]"><Cylinder className="h-3 w-[10px]" />Data Source</button>
      {sheets.map((s) => (
        <button key={s.name} className={`${s.width} shrink-0 whitespace-pre border-r border-[#c8c8c8] pl-[7px] text-left ${s.name === 'Rental payment machinery' ? 'bg-[#fafafa] text-[14px] font-bold text-[#555]' : ''}`}>{s.name}</button>
      ))}
      <button className="min-w-0 flex-1 overflow-hidden whitespace-nowrap border-r border-[#c8c8c8] pl-[7px] text-left">Power expe</button>
      <NewTab label="New worksheet tab" d="M7.500 12.500H2.500v-11h10V7M5.500 9.500v-3M7.500 9.500V4M9.700 7V5.500" />
      <NewTab label="New dashboard tab" d="M7.500 12H1.500V2h11v5M7 2v10M1.500 7h11" />
      <NewTab label="New story tab" d="M6 13l-4-2V2l4 1.500h3L13 2v5.500M7.500 3.500V11" />
    </div>
  )
}

function StatusBar() {
  const nav = ['M1 1v8M9 1L3 5l6 4z', 'M7 1L2 5l5 4z', 'M3 1l5 4-5 4z', 'M9 1v8M1 1l6 4-6 4z']
  return (
    <footer className="flex h-[25px] items-center bg-[#eaeaea] pl-[3px] text-[13px] text-black">
      <span className="w-[76px]">34 marks</span>
      <span className="w-[142px]">1 row by 34 columns</span>
      <span>SUM(Rental Payment For Machinery): 12,738</span>
      <div className="ml-auto flex h-full">
        <div className="w-[158px] border-l border-[#d0d0d0]" />
        <div className="w-8 border-l border-[#d0d0d0]" />
        <div className="w-8 border-l border-[#d0d0d0]" />
        <div className="w-14 border-l border-[#d0d0d0]" />
        <div className="flex w-[71px] items-center justify-center gap-2 border-l border-[#d0d0d0]">
          {nav.map((d) => (
            <button key={d} aria-label="Move through sheets"><svg viewBox="0 0 10 10" className="h-2 w-2" fill="#555" stroke="#555"><path d={d} /></svg></button>
          ))}
        </div>
        <div className="flex w-[70px] items-center justify-center gap-[10px] border-l border-[#d0d0d0]">
          <button aria-label="Sheet sorter"><svg viewBox="0 0 12 11" className="h-[11px] w-3" fill="#bbb"><path d="M0 0h3v3H0zM4.500 0h3v3h-3zM9 0h3v3H9zM0 4h3v3H0zM4.500 4h3v3h-3zM9 4h3v3H9zM0 8h3v3H0zM4.500 8h3v3h-3zM9 8h3v3H9z" /></svg></button>
          <button aria-label="Filmstrip"><svg viewBox="0 0 12 11" className="h-[11px] w-3" fill="#bbb"><path d="M0 0h12v7H0zM0 8h3v3H0zM4.500 8h3v3h-3zM9 8h3v3H9z" /></svg></button>
          <button aria-label="Tabs" className="h-[11px] w-3 bg-[#666]" />
        </div>
      </div>
    </footer>
  )
}

/* ---------- desktop taskbar ---------- */

function TaskIcon({ label, children }: Kids & { label: string }) {
  return (
    <button aria-label={label} className="flex w-[55px] items-center justify-center">
      <svg viewBox="0 0 30 30" className="h-[30px] w-[30px]">{children}</svg>
    </button>
  )
}

function Taskbar() {
  return (
    <div className="grid h-[60px] grid-cols-[1fr_auto_1fr] items-center border-t border-[#55504f] bg-[linear-gradient(90deg,#241d30_0%,#251c35_24%,#2c1a3c_31%,#331b29_40%,#38251f_50%,#451520_56%,#4a1413_62%,#3e1812_75%,#331a1b_100%)] font-['Open_Sans',sans-serif] text-[15px] font-normal text-white">
      <button aria-label="Widgets" className="ml-[13px] w-[30px]">
        <svg viewBox="0 0 30 30" className="h-[30px] w-[30px]"><rect width="30" height="30" rx="2" fill="#0f6cbd" /><rect x="2" y="3" width="12" height="24" rx="1.500" fill="#f4f4f4" /><rect x="16" y="3" width="12" height="12.500" rx="1" fill="#5ddafe" /><rect x="16" y="17" width="12" height="4.500" rx="1" fill="#29a9f5" /><rect x="16" y="22.500" width="12" height="4.500" rx="1" fill="#0a86f0" /></svg>
      </button>
      <div className="flex h-full items-center">
        <TaskIcon label="Start">
          <defs><linearGradient id="win" x1="0" y1="0" x2="1" y2="1"><stop offset="0" stopColor="#7be4fd" /><stop offset="1" stopColor="#1193fb" /></linearGradient></defs>
          <path d="M1 0h13.500v14.500H0V1zM15.500 0H29l1 1v13.500H15.500zM0 15.500h14.500V30H1l-1-1zM15.500 15.500H30V29l-1 1H15.500z" fill="url(#win)" />
        </TaskIcon>
        <label className="mx-[5px] flex h-10 w-[274px] items-center gap-3 rounded-full border border-white/15 bg-white/15 pl-[14px]">
          <svg viewBox="0 0 20 20" className="h-5 w-5 shrink-0" fill="none" stroke="#eee" strokeWidth="2"><circle cx="8.500" cy="8" r="6.500" /><path d="M13 13l5 5.500" /></svg>
          <input aria-label="Search Windows" placeholder="Search" className="w-full min-w-0 text-[16px] outline-none placeholder:text-[#e0dadc]" />
        </label>
        <TaskIcon label="Task view"><rect x="0" y="8" width="22" height="20" rx="2" fill="#6e6a69" /><rect x="8" y="2" width="22" height="20" rx="2" fill="#f2f2f2" fillOpacity=".9" /><path d="M8 8h14v14H9.500L8 20.500z" fill="#b7b4b3" /></TaskIcon>
        <TaskIcon label="Chat">
          <defs><linearGradient id="chat" x1="0" y1="0" x2="1" y2="1"><stop offset="0" stopColor="#8a86e8" /><stop offset="1" stopColor="#4b3fae" /></linearGradient></defs>
          <path d="M15 1a14 14 0 1 1-5 27l-8 1 1.500-6.500A14 14 0 0 1 15 1z" fill="url(#chat)" /><rect x="7" y="9.500" width="11" height="11" rx="2" fill="#fff" /><path d="M19 13.500l4-3v9l-4-3z" fill="#fff" />
        </TaskIcon>
        <TaskIcon label="Edge">
          <defs><linearGradient id="edgeA" x1="0" y1="0" x2="1" y2=".6"><stop offset="0" stopColor="#1d9ae0" /><stop offset=".5" stopColor="#35c1d6" /><stop offset="1" stopColor="#5fe35f" /></linearGradient><linearGradient id="edgeB" x1="0" y1="0" x2="1" y2="1"><stop offset="0" stopColor="#1b86d8" /><stop offset="1" stopColor="#0c3f8f" /></linearGradient></defs>
          <path d="M0 15C1 6 7 0 15 0c9 0 15 6 15 13 0 5-4 8-8.500 8-3.500 0-5-1.500-4-3 2-4-1-7.500-5-7.500C7 10.500 2 13 0 15z" fill="url(#edgeA)" />
          <path d="M0 15c2-3.500 6-6 10.500-6 3 0 5 1 6.500 3-4-.5-7 3-6.500 8 .5 4.500 5 8 10.500 6.500 2-.5 4-1.500 6-3C24.500 28 20 30 15 30 6 30-.5 23 0 15z" fill="url(#edgeB)" />
        </TaskIcon>
        <TaskIcon label="Store"><path d="M9 7V3q0-2 2-2h8q2 0 2 2v4" fill="none" stroke="#3cb1ef" strokeWidth="2" /><path d="M1 6h28v20q0 4-4 4H5q-4 0-4-4z" fill="#f4f4f4" /><path d="M9 12h5.500v5.500H9z" fill="#e74c25" /><path d="M15.500 12H21v5.500h-5.500z" fill="#7cb500" /><path d="M9 18.500h5.500V24H9z" fill="#109fe6" /><path d="M15.500 18.500H21V24h-5.500z" fill="#f9b100" /></TaskIcon>
        <TaskIcon label="Dell"><circle cx="15" cy="15" r="13" fill="none" stroke="#e8e4e4" strokeWidth="1.600" /><text x="15" y="18" textAnchor="middle" fontSize="9" fontWeight="700" fill="#fff">DELL</text></TaskIcon>
        <TaskIcon label="File Explorer"><path d="M0 4q0-2 2-2h8l3 3h15q2 0 2 2v8H0z" fill="#e3a010" /><path d="M0 9q0-1 1-1h11l3-2h14q1 0 1 1v20q0 2-2 2H2q-2 0-2-2z" fill="#ffcf4a" /><path d="M5 29v-6q0-2 2-2h16q2 0 2 2v6z" fill="#1681d8" /><path d="M10 25h10" stroke="#0a5aa5" strokeWidth="1.500" /></TaskIcon>
        <TaskIcon label="Firefox">
          <defs><linearGradient id="fox" x1="1" y1="0" x2="0" y2="1"><stop offset="0" stopColor="#fff04a" /><stop offset=".45" stopColor="#ff9227" /><stop offset="1" stopColor="#f02a5c" /></linearGradient></defs>
          <path d="M20 0c1 3 5 4.500 7 9 4 10-2 21-12 21S-1 22 1.500 12C2 9 3 7 4.500 5.500l1 3C8 6 10 6 12 7c3-1 6-3 8-7z" fill="url(#fox)" /><circle cx="14.500" cy="16.500" r="6.800" fill="#7542e5" /><path d="M5 10c3-2 6-1 8 1l3 1c-1 2-4 2-4 3 0 3 4 4 6 2-1 5-9 7-12 1z" fill="#ff8a22" />
        </TaskIcon>
        <button aria-label="Tableau" className="relative mx-[2px] flex h-[50px] w-[49px] items-center justify-center rounded-md border border-white/5 bg-white/10">
          <span className="flex h-7 w-7 items-center justify-center bg-[#eef5f8]"><TableauMark className="h-6 w-6" colors={['#2f6f8f']} /></span>
          <span className="absolute bottom-0 left-[14px] h-[4px] w-5 rounded-full bg-[#b9a9ee]" />
        </button>
      </div>
      <div className="flex items-center justify-end pr-[25px] leading-5">
        <button aria-label="Hidden icons" className="mr-[26px]"><svg viewBox="0 0 14 8" className="h-2 w-[14px]" fill="none" stroke="#fff" strokeWidth="1.700"><path d="M1 7l6-6 6 6" /></svg></button>
        <button className="mr-5 text-center leading-5">ENG<br />INTL</button>
        <button aria-label="Network, volume and battery" className="mr-5 flex items-center gap-[10px]">
          <svg viewBox="0 0 20 20" className="h-5 w-5" fill="none" stroke="#fff" strokeWidth="1.300"><path d="M18.500 8.500A8.700 8.700 0 1 0 9 18.700M1.500 7h16.500M1.500 13H9M10 1.300C5 5 5 15 9 18.700M10 1.300c2 1.500 3.300 4 3.700 7" /><circle cx="14.500" cy="14.500" r="4.500" /><path d="M11.500 17.500l6-6" /></svg>
          <svg viewBox="0 0 20 20" className="h-5 w-5" fill="none" stroke="#fff" strokeWidth="1.400"><path d="M1 7.500h3L9 3v14l-5-4.500H1z" /><path d="M11.500 7.500q2 2.500 0 5" /><path d="M14 5q4 5 0 10" strokeOpacity=".6" /><path d="M16.500 3q5.500 7 0 14" strokeOpacity=".35" /></svg>
          <svg viewBox="0 0 20 20" className="h-5 w-5" fill="none" stroke="#fff" strokeWidth="1.500"><rect x="1" y="4" width="16" height="12" rx="3" /><rect x="4" y="7" width="10" height="6" rx="1" fill="#fff" /><path d="M19 8v4" strokeWidth="2" /></svg>
        </button>
        <button className="text-right leading-5">17:19<br />04-10-2023</button>
      </div>
    </div>
  )
}

export default function App() {
  return (
    <div className="flex min-h-screen flex-col bg-[#f4f4f4] font-['Noto_Sans',sans-serif] font-light">
      <TitleBar />
      <MenuBar />
      <div className="relative flex flex-1 flex-col">
        <Toolbar />
        <div className="flex flex-1 gap-[6px] border-t border-[#d0d0d0]">
          <DataPane />
          <Cards />
          <Worksheet />
        </div>
        <ShowMe />
      </div>
      <SheetTabs />
      <StatusBar />
      <Taskbar />
    </div>
  )
}
